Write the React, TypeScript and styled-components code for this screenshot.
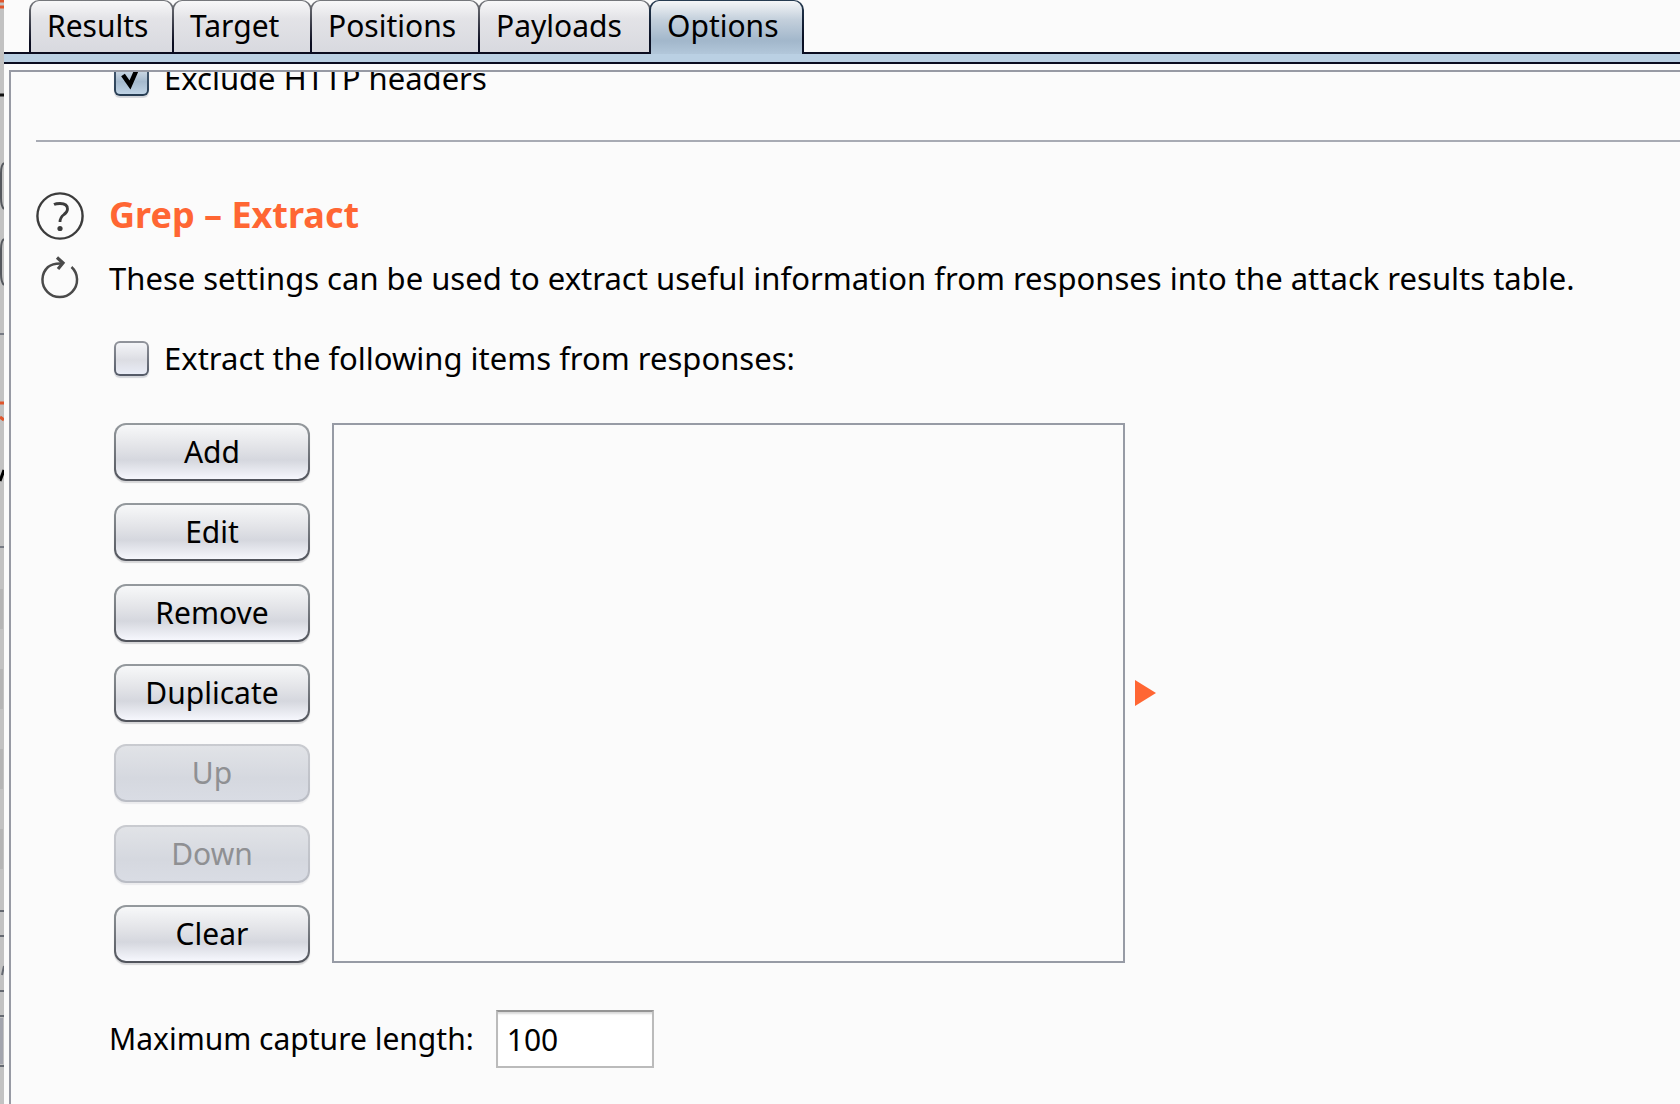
import React, { useState } from "react";
import styled, { createGlobalStyle } from "styled-components";

const GlobalStyle = createGlobalStyle`
  * { box-sizing: border-box; }
  body {
    margin: 0;
    background: #fbfbfb;
    color: #000;
    font-family: "Noto Sans", "Open Sans", sans-serif;
    font-size: 30px;
    line-height: 40px;
  }
  button, input { font: inherit; color: inherit; }
`;

const Desktop = styled.div`
  display: flex;
  min-height: 100vh;
  overflow: hidden;
`;

const WindowBehind = styled.div`
  flex: none;
  width: 4px;
  background: #c2c2c2;
  overflow: hidden;
`;

const AttackWindow = styled.main`
  flex: 1;
  min-width: 0;
  display: flex;
  flex-direction: column;
`;

const TabBar = styled.div`
  display: flex;
  padding-left: 25px;
  height: 54px;
  background: linear-gradient(#0a0c20, #0a0c20) bottom / 100% 2px no-repeat;
`;

const Tab = styled.button<{ $active: boolean; $width: number }>`
  min-width: ${(p) => p.$width}px;
  padding: 0 16px ${(p) => (p.$active ? 4 : 2)}px;
  border: 2px solid transparent;
  border-top-width: 1px;
  border-bottom-color: ${(p) => (p.$active ? "transparent" : "#0a0c20")};
  border-bottom-width: ${(p) => (p.$active ? 0 : 2)}px;
  border-radius: 10px 10px 0 0;
  text-align: left;
  background: ${(p) =>
    p.$active
      ? "linear-gradient(#f4f6f8 0%, #c4d0dc 35%, #a2b7cb 75%, #b2c7da 100%) padding-box, linear-gradient(#263c52, #0a1024 70%) border-box"
      : "linear-gradient(#f8f8f9 0%, #e3e3e7 35%, #d8d9df 100%) padding-box, linear-gradient(#77797d, #0a0c20 80%) border-box"};

  & + & {
    margin-left: -2px;
  }
`;

const TabUnderline = styled.div`
  height: 10px;
  background: #bad0e3;
  border-bottom: 2px solid #0a0c20;
`;

const Panel = styled.section`
  flex: 1;
  margin: 6px 0 0 5px;
  padding-left: 25px;
  border-top: 2px solid #979aa4;
  border-left: 2px solid #979aa4;
`;

const CheckRow = styled.label`
  display: flex;
  align-items: center;
  gap: 15px;
  height: 40px;
  padding-left: 78px;
  font-size: 31px;
`;

const ScrolledRow = styled.div`
  display: flex;
  align-items: flex-end;
  height: 26px;
  overflow: hidden;
`;

const CheckBox = styled.input`
  appearance: none;
  flex: none;
  width: 35px;
  height: 35px;
  margin: 0;
  border: 2px solid transparent;
  border-radius: 6px;
  background: linear-gradient(#f4f5f8 0%, #dcdde3 55%, #e9ecf6 100%) padding-box,
    linear-gradient(#92959c, #535966) border-box;
  box-shadow: 0 2px 1px #d3d5da;

  &:checked {
    background:
      url("data:image/svg+xml,%3Csvg xmlns='http://www.w3.org/2000/svg' viewBox='0 0 31 31'%3E%3Cpath d='M7 12 L14 22 L21 6' fill='none' stroke='black' stroke-width='4.5'/%3E%3C/svg%3E") center / 31px 31px no-repeat padding-box,
      linear-gradient(#e8eef4 0%, #a5bace 60%, #bfd3e5 100%) padding-box,
      linear-gradient(#4c6177, #253b51) border-box;
  }
`;

const Divider = styled.hr`
  height: 2px;
  margin: 42px 0 0;
  border: 0;
  background: #a8abb4;
`;

const Heading = styled.header`
  display: grid;
  grid-template-columns: 48px 1fr;
  column-gap: 25px;
  row-gap: 16px;
  align-items: center;
  justify-items: center;
  margin-top: 50px;
`;

const IconButton = styled.button`
  display: flex;
  padding: 0;
  border: 0;
  background: none;
`;

const Title = styled.h2`
  justify-self: start;
  margin: 0;
  color: #ff6633;
  font-size: 36px;
  line-height: 46px;
  padding-bottom: 2px;
`;

const Description = styled.p`
  justify-self: start;
  margin: 0;
  font-size: 31px;
  white-space: nowrap;
`;

const Extract = styled.div`
  margin-top: 38px;
`;

const ListEditor = styled.div`
  display: flex;
  height: 540px;
  margin: 45px 0 0 78px;
`;

const Actions = styled.div`
  display: flex;
  flex-direction: column;
  justify-content: space-between;
  width: 196px;
  margin-right: 22px;
`;

const ActionButton = styled.button`
  height: 58px;
  padding: 0;
  border: 2px solid transparent;
  border-radius: 12px;
  background: linear-gradient(#f7f8f9 0%, #e3e4e8 40%, #d5d7de 65%, #f6f7fd 100%) padding-box,
    linear-gradient(#959a9e, #50535b) border-box;
  box-shadow: 0 2px 1px #d6d6d8;

  &:disabled {
    color: #8f9093;
    background: linear-gradient(#e1e3e7 0%, #d5d8df 60%, #d9dce4 100%) padding-box,
      linear-gradient(#c9cbd0, #b9bcc4) border-box;
    box-shadow: 0 2px 1px #ececee;
  }
`;

const ItemList = styled.ul`
  width: 793px;
  margin: 0;
  padding: 0;
  border: 2px solid #979ba5;
  list-style: none;
`;

const Expander = styled(IconButton)`
  align-self: center;
  margin-left: 10px;
`;

const CaptureRow = styled.label`
  display: flex;
  align-items: center;
  gap: 22px;
  margin-top: 47px;
  padding: 0 0 34px 73px;
`;

const NumberBox = styled.input`
  width: 158px;
  height: 58px;
  padding: 0 9px;
  border: 2px solid #bbbbbb;
  border-top-color: #959595;
  background: #fff;
  box-shadow: inset 0 3px 2px -1px #d9d9d9;
`;

const TABS = [
  { name: "Results", width: 145 },
  { name: "Target", width: 140 },
  { name: "Positions", width: 170 },
  { name: "Payloads", width: 173 },
  { name: "Options", width: 155 },
];

const ACTIONS = [
  { label: "Add" },
  { label: "Edit" },
  { label: "Remove" },
  { label: "Duplicate" },
  { label: "Up", disabled: true },
  { label: "Down", disabled: true },
  { label: "Clear" },
];

function BehindEdge() {
  return (
    <svg width="4" height="1104" fill="none" aria-hidden="true">
      <path d="M0 1h4M0 7h4M0 403h4M0 417l4 3" stroke="#e0562c" strokeWidth="3" />
      <path d="M0 95h4" stroke="#111" strokeWidth="3" />
      <path d="M4 163Q1 165 1 173V198Q1 206 4 209M4 239Q1 241 1 249V274Q1 282 4 285" stroke="#55585e" strokeWidth="2" />
      <path d="M0 334h4M0 547h4" stroke="#777b84" strokeWidth="2" />
      <path d="M0 481l4-11" stroke="#000" strokeWidth="3" />
      <path d="M0 589h3v40H0zM0 669h3v40H0zM0 749h3v40H0zM0 829h3v40H0z" fill="#b5b5b5" />
      <path d="M0 911h4M0 936h4M2 975l2-9M0 991h4M0 1016h4M0 1066h4" stroke="#666a72" strokeWidth="2" />
      <path d="M0 1018h3v46H0z" fill="#a3a5ae" />
    </svg>
  );
}

function HelpIcon() {
  return (
    <svg width="48" height="48" viewBox="0 0 48 48" fill="none" stroke="#3c3c3c" aria-hidden="true">
      <circle cx="24" cy="24" r="22.6" strokeWidth="2.4" />
      <path d="M18 12.500Q20 11.5 24 11.5Q31.500 11.5 31.500 17Q31.500 20 28 22.500Q24 25.500 24 30" strokeWidth="2.800" />
      <circle cx="24" cy="36.500" r="2.600" fill="#3c3c3c" stroke="none" />
    </svg>
  );
}

function ReloadIcon() {
  return (
    <svg width="40" height="44" viewBox="0 0 40 44" fill="none" stroke="#4a4a4a" aria-hidden="true">
      <path d="M31.500 11A17.300 17.300 0 1 1 8 11Q13 7 22 7.500" strokeWidth="2.500" />
      <path d="M17 1.500l6 5.500-5 6" strokeWidth="3.200" />
    </svg>
  );
}

export default function App() {
  const [tab, setTab] = useState("Options");
  return (
    <>
      <GlobalStyle />
      <Desktop>
        <WindowBehind>
          <BehindEdge />
        </WindowBehind>
        <AttackWindow>
          <TabBar role="tablist">
            {TABS.map(({ name, width }) => (
              <Tab
                key={name}
                role="tab"
                aria-selected={tab === name}
                $active={tab === name}
                $width={width}
                onClick={() => setTab(name)}
              >
                {name}
              </Tab>
            ))}
          </TabBar>
          <TabUnderline />
          <Panel>
            <ScrolledRow>
              <CheckRow htmlFor="exclude-headers">
                <CheckBox id="exclude-headers" type="checkbox" defaultChecked />
                Exclude HTTP headers
              </CheckRow>
            </ScrolledRow>
            <Divider />
            <Heading>
              <IconButton aria-label="Help">
                <HelpIcon />
              </IconButton>
              <Title>Grep – Extract</Title>
              <IconButton aria-label="Restore defaults">
                <ReloadIcon />
              </IconButton>
              <Description>
                These settings can be used to extract useful information from responses into the attack results table.
              </Description>
            </Heading>
            <Extract>
              <CheckRow htmlFor="extract-items">
                <CheckBox id="extract-items" type="checkbox" />
                Extract the following items from responses:
              </CheckRow>
              <ListEditor>
                <Actions>
                  {ACTIONS.map((action) => (
                    <ActionButton key={action.label} disabled={action.disabled}>
                      {action.label}
                    </ActionButton>
                  ))}
                </Actions>
                <ItemList aria-label="Extracted items" />
                <Expander aria-label="Expand">
                  <svg width="21" height="26" viewBox="0 0 21 26" aria-hidden="true">
                    <path d="M0 0L21 13L0 26z" fill="#ff6633" />
                  </svg>
                </Expander>
              </ListEditor>
              <CaptureRow htmlFor="max-length">
                Maximum capture length:
                <NumberBox id="max-length" type="text" inputMode="numeric" defaultValue="100" />
              </CaptureRow>
            </Extract>
          </Panel>
        </AttackWindow>
      </Desktop>
    </>
  );
}
